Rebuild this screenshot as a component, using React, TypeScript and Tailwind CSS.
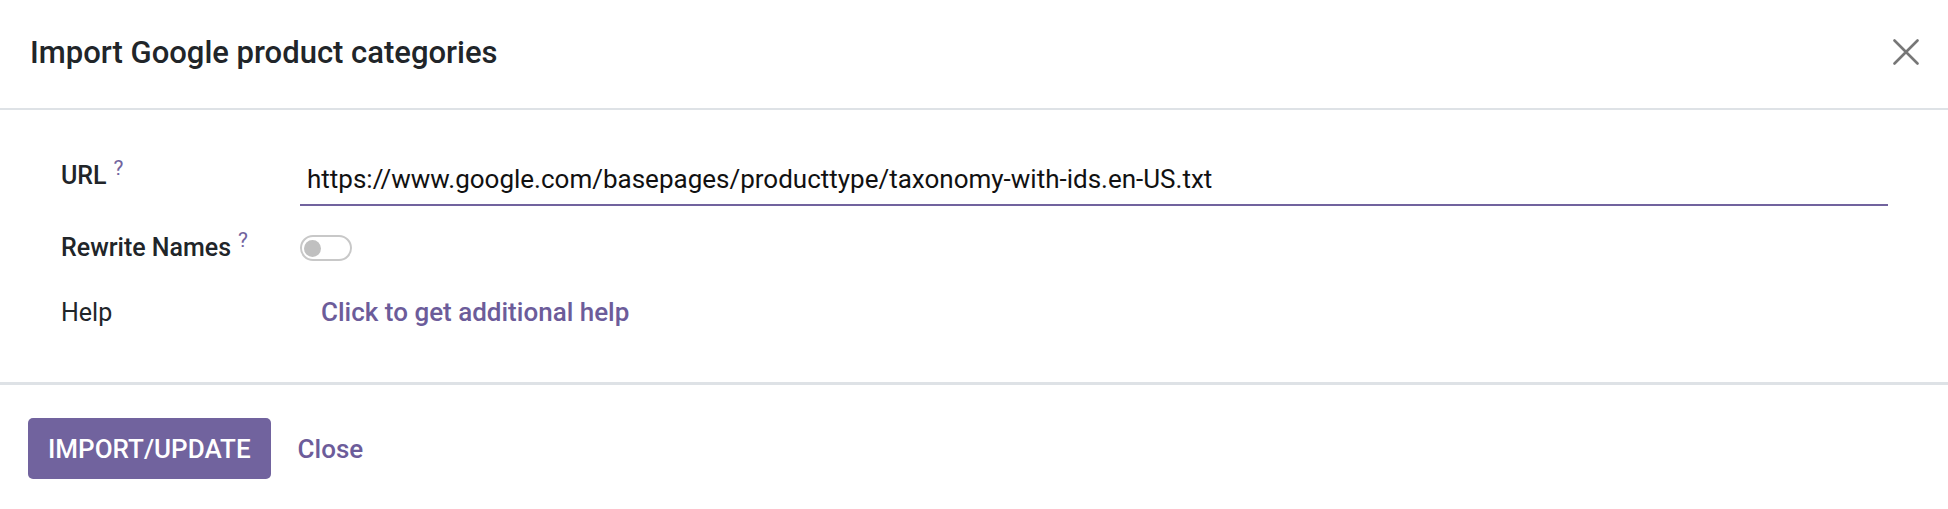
import React from 'react'

const purple = '#71639e'

function Help() {
  return (
    <span className="relative top-[1px] ml-[7px] inline-block align-top text-[21px] leading-none font-normal text-[#71639e]">
      ?
    </span>
  )
}

function FieldLabel({ children, bold = true, help = false }: { children: React.ReactNode; bold?: boolean; help?: boolean }) {
  return (
    <div className={`w-[239px] shrink-0 text-[25px] leading-[37px] text-[#212529] ${bold ? 'font-medium' : 'font-normal'}`}>
      {children}
      {help && <Help />}
    </div>
  )
}

export default function App() {
  return (
    <div className="w-full h-[509px] bg-white flex flex-col" style={{ fontFamily: 'Roboto, "Noto Sans", sans-serif' }}>
      {/* Header */}
      <div className="h-[110px] shrink-0 flex items-center justify-between pl-[30px] pr-[29px] pb-[4px] border-b-2 border-[#dee2e6]">
        <h4 className="text-[31px] font-medium text-[#212529] leading-none">Import Google product categories</h4>
        <button className="w-[26px] h-[26px] flex items-center justify-center" aria-label="Close">
          <svg width="26" height="26" viewBox="0 0 26 26" fill="none" stroke="#777777" strokeWidth="2.6" strokeLinecap="round">
            <path d="M1.5 1.5 L24.5 24.5 M24.5 1.5 L1.5 24.5" />
          </svg>
        </button>
      </div>

      {/* Body */}
      <div className="pl-[61px] pr-[60px] pt-[47px] pb-[51px] flex flex-col">
        <div className="flex items-start h-[50px]">
          <FieldLabel help>URL</FieldLabel>
          <div className="flex-1 mt-[4px] pb-[6px] border-b-2 border-[#71639e]">
            <div className="pl-[7px] text-[26px] leading-[37px] text-[#111111]">
              https://www.google.com/basepages/producttype/taxonomy-with-ids.en-US.txt
            </div>
          </div>
        </div>

        <div className="flex items-center h-[37px] mt-[22px]">
          <FieldLabel help>Rewrite Names</FieldLabel>
          <div className="w-[52px] h-[26px] rounded-full border-2 border-[#c8c8c8] flex items-center pl-[2px] mt-[1px]">
            <div className="w-[17px] h-[17px] rounded-full bg-[#c0c0c0]" />
          </div>
        </div>

        <div className="flex items-center h-[37px] mt-[28px]">
          <FieldLabel bold={false}>Help</FieldLabel>
          <a className="ml-[21px] text-[26px] leading-[37px] font-medium text-[#6c5c9a]">Click to get additional help</a>
        </div>
      </div>

      {/* Footer */}
      <div className="flex-1 border-t-[3px] border-[#dee2e6] flex items-start gap-[27px] pl-[28px] pt-[33px]">
        <button
          className="h-[61px] px-[20px] rounded-[5px] text-white text-[26px] font-medium leading-none"
          style={{ background: purple }}
        >
          IMPORT/UPDATE
        </button>
        <button className="h-[61px] text-[26px] font-medium text-[#6c5c9a] leading-none">Close</button>
      </div>
    </div>
  )
}
